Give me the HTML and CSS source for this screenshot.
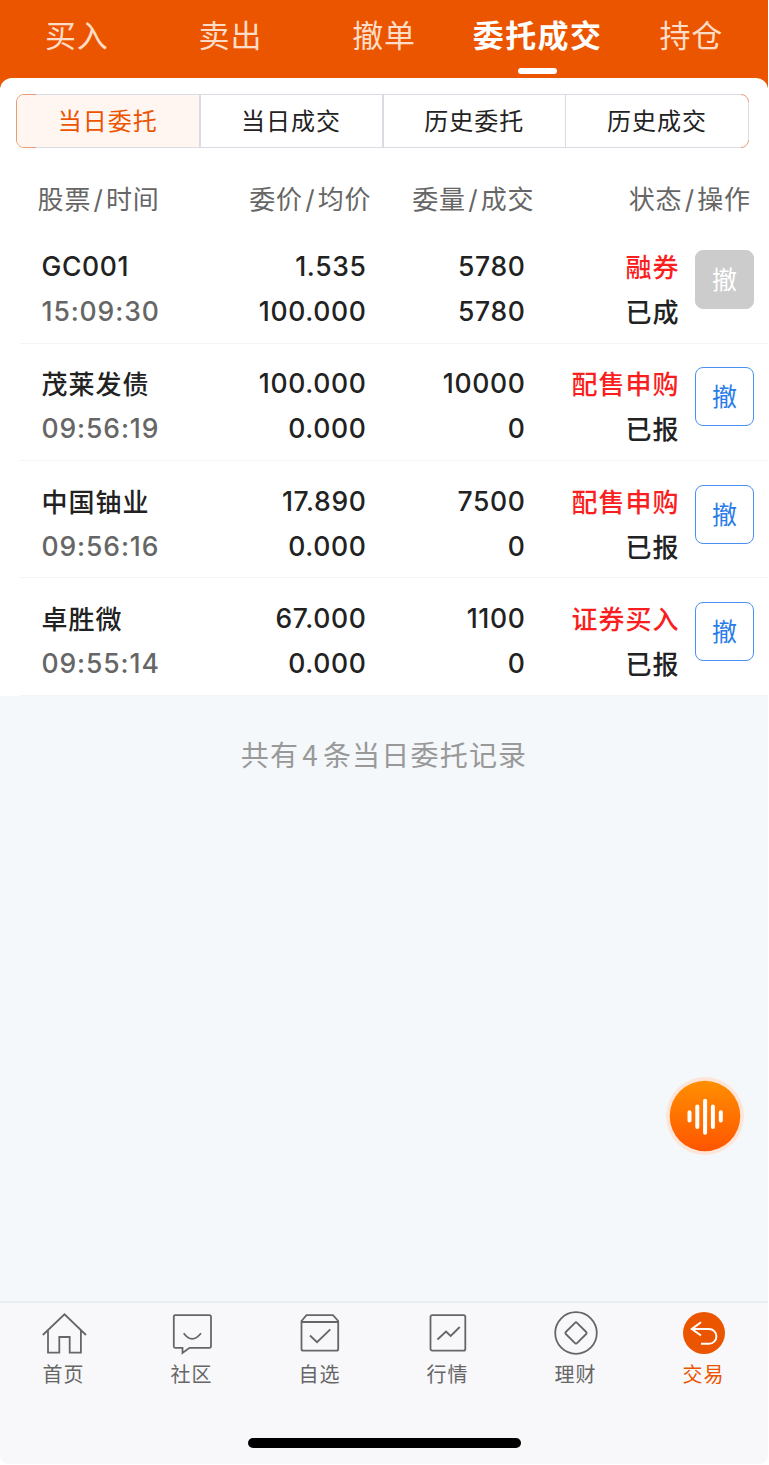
FILE: index.html
```html
<!DOCTYPE html>
<html lang="zh-CN">
<head>
<meta charset="utf-8">
<title>委托成交</title>
<link rel="stylesheet" href="styles.css">
</head>
<body>
<div class="app">
  <nav class="top-tabs">
    <a class="top-tab">买入</a>
    <a class="top-tab">卖出</a>
    <a class="top-tab">撤单</a>
    <a class="top-tab top-tab--active">委托成交</a>
    <a class="top-tab">持仓</a>
  </nav>
  <main class="card">
    <div class="segments">
      <a class="segment segment--active">当日委托</a>
      <a class="segment">当日成交</a>
      <a class="segment">历史委托</a>
      <a class="segment">历史成交</a>
    </div>
    <div class="head">
      <span>股票<i>/</i>时间</span>
      <span>委价<i>/</i>均价</span>
      <span>委量<i>/</i>成交</span>
      <span>状态<i>/</i>操作</span>
    </div>
    <div class="row">
      <div class="cell"><span>GC001</span><span class="time">15:09:30</span></div>
      <div class="cell"><span>1.535</span><span>100.000</span></div>
      <div class="cell"><span>5780</span><span>5780</span></div>
      <div class="cell"><span class="han kind">融券</span><span class="han">已成</span></div>
      <button class="cancel cancel--off">撤</button>
    </div>
    <div class="row">
      <div class="cell"><span class="han">茂莱发债</span><span class="time">09:56:19</span></div>
      <div class="cell"><span>100.000</span><span>0.000</span></div>
      <div class="cell"><span>10000</span><span>0</span></div>
      <div class="cell"><span class="han kind">配售申购</span><span class="han">已报</span></div>
      <button class="cancel">撤</button>
    </div>
    <div class="row">
      <div class="cell"><span class="han">中国铀业</span><span class="time">09:56:16</span></div>
      <div class="cell"><span>17.890</span><span>0.000</span></div>
      <div class="cell"><span>7500</span><span>0</span></div>
      <div class="cell"><span class="han kind">配售申购</span><span class="han">已报</span></div>
      <button class="cancel">撤</button>
    </div>
    <div class="row">
      <div class="cell"><span class="han">卓胜微</span><span class="time">09:55:14</span></div>
      <div class="cell"><span>67.000</span><span>0.000</span></div>
      <div class="cell"><span>1100</span><span>0</span></div>
      <div class="cell"><span class="han kind">证券买入</span><span class="han">已报</span></div>
      <button class="cancel">撤</button>
    </div>
  </main>
  <p class="summary">共有<i>4</i>条当日委托记录</p>
  <button class="voice">
    <svg viewBox="0 0 78 78" width="78" height="78">
      <defs><linearGradient id="voice-fill" x1="0" y1="0" x2="0" y2="1"><stop offset="0" stop-color="#ff8f00"/><stop offset="1" stop-color="#ff5500"/></linearGradient></defs>
      <circle cx="39" cy="39" r="39" fill="#fee5d9"/>
      <circle cx="39" cy="39" r="35.3" fill="url(#voice-fill)"/>
      <path d="M23.5 35.2v8.4M31.3 29.5v20.5M39.1 23.8v32M46.9 29.5v20.5M54.8 35.2v8.4" stroke="#fff" stroke-width="4" stroke-linecap="round"/>
    </svg>
  </button>
  <footer class="dock">
    <nav class="dock-tabs">
      <a class="dock-tab">
        <svg class="icon" viewBox="0 0 44 44"><path d="M.8 23 22.5 2.3 44 23M6 18.5V40.6H17.3V25H27.7V40.6H38.9V18.5"/></svg>
        <span>首页</span>
      </a>
      <a class="dock-tab">
        <svg class="icon" viewBox="0 0 44 44"><path d="M5 3.2H39.3Q41 3.2 41 5V34Q41 35.8 39.3 35.8H19.5L12.5 41V35.8H5Q3.8 35.8 3.8 34V5Q3.8 3.2 5 3.2Z"/><path d="M13.7 21.3Q22 32.5 31 21.3"/></svg>
        <span>社区</span>
      </a>
      <a class="dock-tab">
        <svg class="icon" viewBox="0 0 44 44"><path d="M8.5 3.2H35L40.2 9V37Q40.2 38.7 38.5 38.7H5.3Q3.5 38.7 3.5 37V9ZM3.5 10H40.2M12 23.5 19 30.2 32.3 17.3"/></svg>
        <span>自选</span>
      </a>
      <a class="dock-tab">
        <svg class="icon" viewBox="0 0 44 44"><rect x="4.5" y="3.2" width="34.8" height="35.5" rx="1.7"/><path d="M11.5 27.5 20 19.5 24.7 24 33.7 15"/></svg>
        <span>行情</span>
      </a>
      <a class="dock-tab">
        <svg class="icon" viewBox="0 0 44 44"><circle cx="22" cy="21" r="20.8"/><path d="M21 10.8Q22 9.8 23 10.8L32.2 20Q33.2 21 32.2 22L23 31.2Q22 32.2 21 31.2L11.8 22Q10.8 21 11.8 20Z"/></svg>
        <span>理财</span>
      </a>
      <a class="dock-tab dock-tab--active">
        <svg class="icon" viewBox="0 0 44 44"><circle class="disc" cx="22" cy="21" r="21"/><path class="arrow" d="M19 10.2 9.8 17 19 23.5M9.8 17H27A7.3 7.3 0 0 1 27 31.8H19"/></svg>
        <span>交易</span>
      </a>
    </nav>
    <div class="home-bar"></div>
  </footer>
</div>
</body>
</html>
```
FILE: styles.css
```css
* { box-sizing: border-box; }
body {
  margin: 0;
  background: #fff;
  font-family: Inter, "Noto Sans CJK SC", sans-serif;
  color: #222;
}
i { font-style: normal; }
button { font-family: inherit; padding: 0; }
.app {
  position: relative;
  width: 768px;
  height: 1464px;
  display: flex;
  flex-direction: column;
  overflow: hidden;
  border-radius: 0 0 9px 9px;
  background: linear-gradient(#eb5500 0 100px, #f4f8fa 100px);
}
.top-tabs {
  display: grid;
  grid-template-columns: repeat(5, 1fr);
  height: 78px;
}
.top-tab {
  position: relative;
  font-size: 31px;
  line-height: 72px;
  letter-spacing: 0.8px;
  text-align: center;
  color: #ffdcc6;
}
.top-tab--active { color: #fff; font-weight: 700; letter-spacing: 1.4px; }
.top-tab--active::after {
  content: "";
  position: absolute;
  left: 57px;
  top: 68px;
  width: 39px;
  height: 6px;
  border-radius: 3px;
  background: #fff;
}
.card {
  padding-top: 16px;
  border-radius: 12px 12px 0 0;
  background: #fff;
}
.segments {
  position: relative;
  display: grid;
  grid-template-columns: 183.5px 183px 182.5px 1fr;
  width: 733px;
  height: 54px;
  margin-left: 16px;
  border: 1px solid #eb9a73;
  border-radius: 8px;
}
.segments::before {
  content: "";
  position: absolute;
  inset: 7px -1px;
  border-right: 1px solid #d9dde3;
}
.segments::after {
  content: "";
  position: absolute;
  inset: -1px 7px -1px 19px;
  border: solid #d9dde3;
  border-width: 1px 0;
}
.segment {
  border-right: 1px solid #d9dde3;
  font-size: 24px;
  line-height: 54px;
  height: 52px;
  letter-spacing: 1px;
  text-align: center;
}
.segment:nth-child(-n+2) { border-right-width: 2px; }
.segment:first-child { border-radius: 7px 0 0 7px; }
.segment:last-child { border-right: 0; }
.segment--active { background: #fff6f2; color: #eb5500; }
.head {
  display: grid;
  grid-template-columns: 168px 203.5px 163px 216.5px;
  height: 78.5px;
  padding-top: 27px;
  font-size: 26px;
  line-height: 49px;
  letter-spacing: 0.9px;
  text-align: right;
  color: #666;
}
.head span:first-child { text-align: left; padding-left: 37.5px; }
.head i { margin: 0 2.2px; }
.row {
  display: grid;
  grid-template-columns: 181px 165.5px 159px 154px 58px;
  height: 117.3px;
  margin-left: 20px;
  padding-top: 17px;
  border-bottom: 1.5px solid #f4f4f5;
}
.row:nth-child(n+4) { padding-top: 17.5px; }
.cell {
  display: flex;
  flex-direction: column;
  font-size: 26.5px;
  font-weight: 550;
  line-height: 45px;
  letter-spacing: 0.65px;
  text-align: right;
}
.cell:first-child { text-align: left; padding-left: 21.5px; }
.han {
  font-size: 26px;
  font-weight: 500;
  line-height: 47px;
  margin-bottom: -2px;
  letter-spacing: 1px;
}
.time { color: #666; font-weight: 530; letter-spacing: 0.9px; }
.kind { color: #fa1e1e; }
.cancel {
  width: 59px;
  height: 59px;
  margin: 6px 0 0 15.5px;
  border: 1.5px solid #4a90f0;
  border-radius: 8px;
  background: #fff;
  color: #2a7de8;
  font-size: 25px;
  line-height: 56px;
  padding-top: 1px;
}
.cancel--off { border-color: #ccc; background: #ccc; color: #fff; }
.summary {
  margin: 34.5px 0 0;
  font-size: 28px;
  line-height: 49px;
  letter-spacing: 1.2px;
  text-align: center;
  color: #999;
}
.summary i { margin: 0 4px 0 3px; font-family: "Noto Sans CJK SC", sans-serif; }
.voice {
  position: absolute;
  left: 666px;
  top: 1077px;
  width: 78px;
  height: 78px;
  border: 0;
  background: none;
}
.voice svg { display: block; }
.dock {
  height: 163px;
  margin-top: auto;
  border-top: 2px solid #e9edef;
  background: #f8f8fb;
}
.dock-tabs {
  display: grid;
  grid-template-columns: repeat(6, 1fr);
  height: 135px;
  padding-top: 9px;
}
.dock-tab {
  display: flex;
  flex-direction: column;
  align-items: center;
  font-size: 20px;
  line-height: 38px;
  letter-spacing: 1px;
  color: #666;
}
.dock-tab span { margin-right: 1px; }
.icon {
  width: 44px;
  height: 44px;
  fill: none;
  stroke: #666;
  stroke-width: 1.8;
  overflow: visible;
}
.dock-tab--active { color: #eb5500; }
.disc { fill: #eb5500; stroke: none; }
.arrow { stroke: #fff; stroke-width: 2; }
.home-bar {
  width: 273px;
  height: 10px;
  margin: 0 auto;
  border-radius: 5px;
  background: #000;
}
```
